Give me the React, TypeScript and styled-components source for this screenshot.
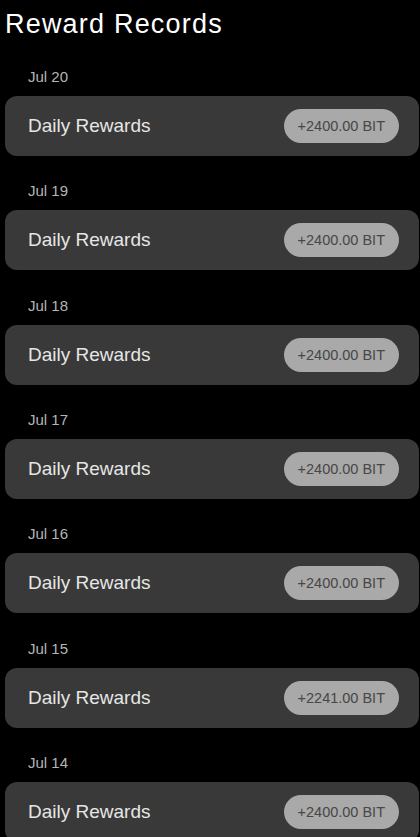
import styled, { createGlobalStyle } from "styled-components";

const GlobalStyle = createGlobalStyle`
	html, body {
		margin: 0;
		padding: 0;
		background-color: #000;
		font-family: "Liberation Sans", Arial, sans-serif;
	}
`;

const Page = styled.div`
	display: flex;
	flex-direction: column;
	min-height: 100vh;
	background-color: #000;
	overflow: hidden;
`;

const Title = styled.h1`
	margin: 9px 0 0 5px;
	font-size: 27px;
	line-height: 30px;
	font-weight: 400;
	letter-spacing: 1.2px;
	color: #fff;
`;

const RecordList = styled.ul`
	display: flex;
	flex-direction: column;
	gap: 25.33px;
	margin: 28px 0 0;
	padding: 0;
	list-style: none;
`;

const Record = styled.li`
	display: flex;
	flex-direction: column;
	gap: 9px;
`;

const DateLabel = styled.span`
	padding-left: 28px;
	font-size: 15px;
	line-height: 20px;
	color: #b5b5b5;
`;

const Card = styled.div`
	display: flex;
	align-items: center;
	justify-content: space-between;
	box-sizing: border-box;
	width: 414px;
	height: 60px;
	margin-left: 5px;
	padding: 0 20px 0 23px;
	border-radius: 12px;
	background-color: #393939;
`;

const Label = styled.span`
	font-size: 19px;
	color: #e6e6e6;
`;

const Amount = styled.span`
	display: flex;
	align-items: center;
	height: 34px;
	padding: 0 14px;
	border-radius: 17px;
	background-color: #a9a9a9;
	color: #474747;
	font-size: 14.5px;
`;

interface RewardRecord {
	date: string;
	amount: string;
}

const records: RewardRecord[] = [
	{ date: "Jul 20", amount: "2400.00" },
	{ date: "Jul 19", amount: "2400.00" },
	{ date: "Jul 18", amount: "2400.00" },
	{ date: "Jul 17", amount: "2400.00" },
	{ date: "Jul 16", amount: "2400.00" },
	{ date: "Jul 15", amount: "2241.00" },
	{ date: "Jul 14", amount: "2400.00" },
];

const App: React.FC = () => {
	return (
		<Page>
			<GlobalStyle />
			<Title>Reward Records</Title>
			<RecordList>
				{records.map((r) => (
					<Record key={r.date}>
						<DateLabel>{r.date}</DateLabel>
						<Card>
							<Label>Daily Rewards</Label>
							<Amount>{`+${r.amount} BIT`}</Amount>
						</Card>
					</Record>
				))}
			</RecordList>
		</Page>
	);
};

export default App;
